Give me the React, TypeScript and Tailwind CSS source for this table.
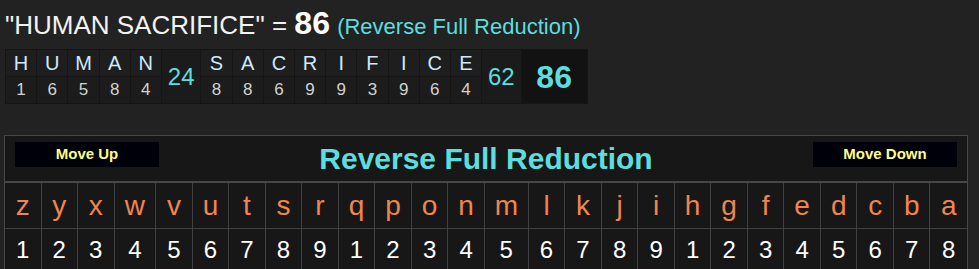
import React from "react";

const word1 = [
  ["H", "1"],
  ["U", "6"],
  ["M", "5"],
  ["A", "8"],
  ["N", "4"],
];
const word2 = [
  ["S", "8"],
  ["A", "8"],
  ["C", "6"],
  ["R", "9"],
  ["I", "9"],
  ["F", "3"],
  ["I", "9"],
  ["C", "6"],
  ["E", "4"],
];

const letters = "zyxwvutsrqponmlkjihgfedcba".split("");
const values = [1, 2, 3, 4, 5, 6, 7, 8, 9, 1, 2, 3, 4, 5, 6, 7, 8, 9, 1, 2, 3, 4, 5, 6, 7, 8];

function LetterCol({ l, n }: { l: string; n: string }) {
  return (
    <div className="flex w-[30.2px] flex-col gap-px">
      <div className="flex h-[26px] items-center justify-center bg-[#1e1e1e] text-[20px] leading-[23px] text-[#cfe8fa]">
        {l}
      </div>
      <div className="flex h-[26px] items-center justify-center bg-[#1c1c1c] text-[17px] leading-[20px] text-[#d2d2d2]">
        {n}
      </div>
    </div>
  );
}

function SumCell({ v }: { v: string }) {
  return (
    <div className="flex h-[53px] w-[38.5px] items-center justify-center bg-[#1b1b1b] text-[24px] leading-[28px] text-[#5cdede]">
      {v}
    </div>
  );
}

export default function App() {
  return (
    <div
      className="min-h-[269px] w-[979px] overflow-hidden bg-[#222222]"
      style={{ fontFamily: '"Liberation Sans", Arial, sans-serif' }}
    >
      <div className="h-[49px] whitespace-nowrap pl-[5px] pt-[8px] text-[26px] leading-[30px] text-[#f2f2f2]">
        "HUMAN SACRIFICE" = <span className="text-[32px] font-bold text-white">86</span>{" "}
        <span className="text-[22px] text-[#5cdede]">(Reverse Full Reduction)</span>
      </div>

      <div className="ml-[5px] inline-flex gap-px bg-[#151515] p-px">
        {word1.map(([l, n], i) => (
          <LetterCol key={"a" + i} l={l} n={n} />
        ))}
        <SumCell v="24" />
        {word2.map(([l, n], i) => (
          <LetterCol key={"b" + i} l={l} n={n} />
        ))}
        <SumCell v="62" />
        <div className="flex h-[53px] w-[65px] items-center justify-center bg-[#121212] text-[32px] font-bold leading-[36px] text-[#5cdede]">
          86
        </div>
      </div>

      <div className="ml-[4px] mt-[31px] w-[964px] border border-[#474747] bg-[#171717]">
        <div className="grid h-[47px] grid-cols-[1fr_auto_1fr] items-start border-b-2 border-[#474747] px-[10px] pt-[6px]">
          <button className="flex h-[25px] w-[144px] items-center justify-center justify-self-start bg-[#00000a] text-[15px] font-bold text-[#ffff80]">
            Move Up
          </button>
          <div className="text-[30px] font-bold leading-[34px] text-[#5cdede]">Reverse Full Reduction</div>
          <button className="flex h-[25px] w-[144px] items-center justify-center justify-self-end bg-[#00000a] text-[15px] font-bold text-[#ffff80]">
            Move Down
          </button>
        </div>
        <div className="grid grid-cols-[repeat(3,36.6fr)_41.7fr_repeat(9,36.6fr)_44fr_repeat(12,36.6fr)]">
          {letters.map((l, i) => (
            <div
              key={"l" + i}
              className={
                "flex h-[46px] items-center justify-center border-b border-[#404040] text-[28px] leading-[32px] text-[#f0854e] " +
                (i < 25 ? "border-r" : "")
              }
            >
              {l}
            </div>
          ))}
          {values.map((v, i) => (
            <div
              key={"v" + i}
              className={
                "flex h-[46px] items-start justify-center border-[#404040] pt-[7px] text-[24px] leading-[28px] text-white " +
                (i < 25 ? "border-r" : "")
              }
            >
              {v}
            </div>
          ))}
        </div>
      </div>
    </div>
  );
}
